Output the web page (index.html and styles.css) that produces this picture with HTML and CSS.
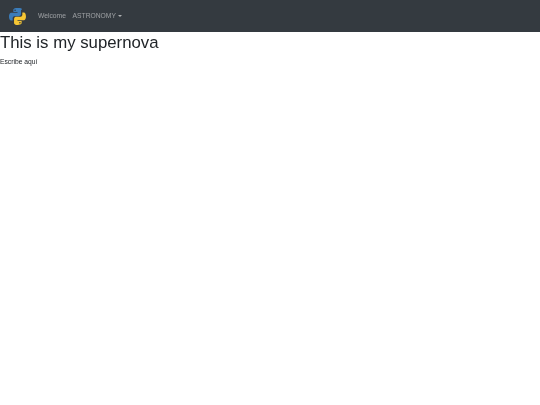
FILE: index.html
```html
<!DOCTYPE html>
<html lang="en">
<head>
<meta charset="utf-8">
<title>Supernova</title>
<link rel="stylesheet" href="styles.css">
</head>
<body>
<nav class="navbar">
  <svg class="logo" viewBox="0 0 110 110" aria-hidden="true">
    <path class="py-blue" d="M54 6C30 6 31 17 31 17v12h24v4H21S6 31 6 55s13 23 13 23h8V66s-1-13 13-13h23s12 0 12-12V19S97 6 54 6zM41 14a4.500 4.500 0 1 1 0 9a4.500 4.500 0 0 1 0-9z"/>
    <path class="py-yellow" d="M56 104c24 0 23-11 23-11V81H55v-4h34s15 2 15-22-13-23-13-23h-8v12s1 13-13 13H47s-12 0-12 12v22s-2 13 21 13zm13-8a4.500 4.500 0 1 1 0-9a4.500 4.500 0 0 1 0 9z"/>
  </svg>
  <a class="nav-link" href="#">Welcome</a>
  <a class="nav-link dropdown" href="#">ASTRONOMY<span class="caret"></span></a>
</nav>
<h1 class="title">This is my supernova</h1>
<p class="body-text">Escribe aquí</p>
</body>
</html>
```
FILE: styles.css
```css
html, body { margin: 0; padding: 0; background: #fff; }
body { font-family: "Liberation Sans", Arial, sans-serif; color: #212529; }
.navbar { display: flex; align-items: center; height: 32px; background: #343a40; padding-left: 8px; }
.logo { width: 19px; height: 19px; margin-right: 11px; filter: blur(0.3px); }
.py-blue { fill: #3b7dbb; }
.py-yellow { fill: #f5c534; }
.nav-link { font-size: 6.720px; line-height: 10px; padding-bottom: 1px; color: rgba(255,255,255,.5); text-decoration: none; margin-right: 6.700px; filter: blur(0.3px); }
.dropdown { display: flex; align-items: center; }
.caret { width: 0; height: 0; margin-left: 2.500px; border-top: 2px solid rgba(255,255,255,.6); border-left: 2px solid transparent; border-right: 2px solid transparent; }
.title { margin: 0; padding-top: 1px; font-size: 16.800px; font-weight: 400; line-height: 20px; filter: blur(0.3px); }
.body-text { margin: 3.500px 0 0; font-size: 6.720px; line-height: 10px; filter: blur(0.3px); }
```
